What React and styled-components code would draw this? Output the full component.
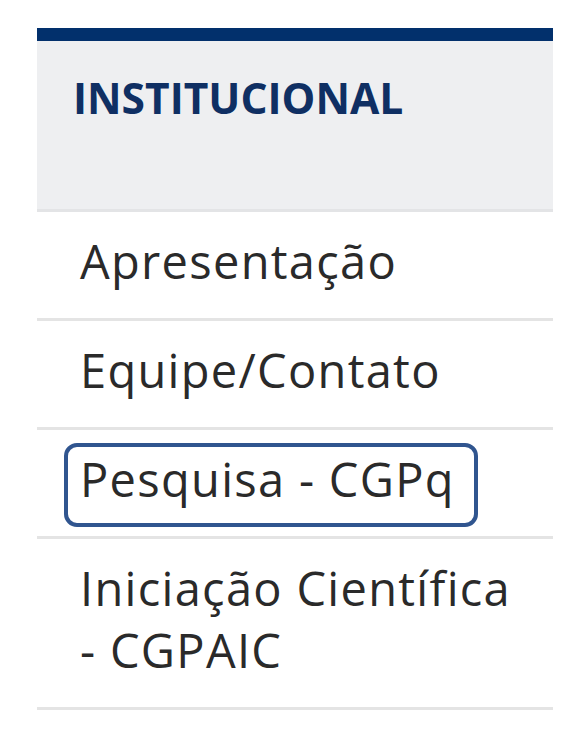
import React from 'react';
import styled, { createGlobalStyle } from 'styled-components';

const GlobalStyle = createGlobalStyle`
  body {
    margin: 0;
    background: #fff;
    font-family: "Open Sans", "Noto Sans", sans-serif;
  }
`;

const Sidebar = styled.nav`
  width: 516px;
  margin: 28px 0 0 37px;
  border-top: 13px solid #02306c;
`;

const Header = styled.div`
  height: 171px;
  box-sizing: border-box;
  padding: 31px 0 0 36px;
  background-color: #eeeff1;
  border-bottom: 3px solid #e3e4e6;
  color: #0f2f63;
  font-size: 42.5px;
  font-weight: 700;
  line-height: 52px;
`;

const Menu = styled.ul`
  list-style: none;
  margin: 0;
  padding: 0;
`;

const Item = styled.li`
  padding: 13px 0 9px 27px;
  border-bottom: 3px solid #e4e4e4;
`;

const Link = styled.a`
  display: inline-block;
  padding: 1px 19px 13px 12px;
  border: 4px solid ${({ active }) => (active ? '#30558f' : 'transparent')};
  border-radius: 13px;
  color: #2a2a2a;
  font-size: 47px;
  letter-spacing: 1.3px;
  line-height: 62px;
  text-decoration: none;
`;

const NoWrap = styled.span`
  white-space: nowrap;
`;

const items = [
  { label: 'Apresentação' },
  { label: 'Equipe/Contato' },
  { label: 'Pesquisa - CGPq', active: true },
  { label: 'Iniciação Científica', tail: '- CGPAIC' },
];

const App = () => {
  return (
    <>
      <GlobalStyle />
      <Sidebar>
        <Header>INSTITUCIONAL</Header>
        <Menu>
          {items.map(({ label, tail, active }) => (
            <Item key={label}>
              <Link href="#" active={active ? 1 : 0}>
                {label}
                {tail && <> <NoWrap>{tail}</NoWrap></>}
              </Link>
            </Item>
          ))}
        </Menu>
      </Sidebar>
    </>
  );
};

export default App;
